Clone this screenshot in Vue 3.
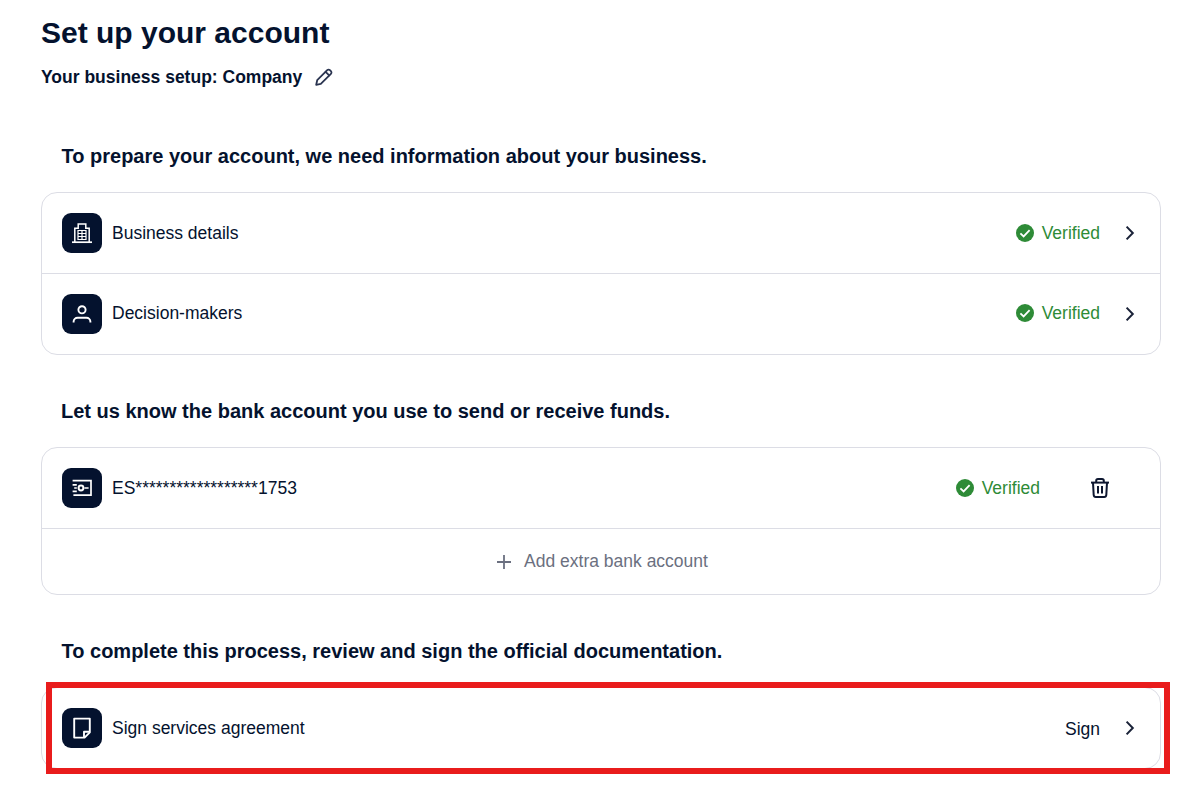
<script setup>
const verified = 'Verified'
</script>

<template>
  <div class="page">
    <h1 class="title">Set up your account</h1>
    <div class="setup">
      <span>Your business setup: Company</span>
      <svg class="pencil" width="20" height="20" viewBox="0 0 20 20" fill="none" stroke="#2a3450" stroke-width="1.8" stroke-linejoin="round" stroke-linecap="round">
        <path d="M2.2 17.8l1-4.6L13.2 3.1a1.9 1.9 0 0 1 2.7 0l1 1a1.9 1.9 0 0 1 0 2.7L6.8 16.8l-4.6 1z" />
        <path d="M11.6 4.8l3.6 3.6" />
      </svg>
    </div>

    <h2 class="heading first">To prepare your account, we need information about your business.</h2>
    <div class="card">
      <div class="row">
        <span class="badge">
          <svg width="24" height="24" viewBox="0 0 24 24" fill="none" stroke="#fff" stroke-width="1.5">
            <path d="M4.8 21V7.2h3.4V3h7.6v4.2h3.4V21" />
            <path d="M2 21.2h20" stroke-width="1.7" />
            <path d="M8 9.5h8v9H8zM12 9.5v9M8 12.5h8M8 15.5h8" stroke-width="1.2" />
          </svg>
        </span>
        <span class="label">Business details</span>
        <span class="status">
          <svg width="18" height="18" viewBox="0 0 18 18">
            <circle cx="9" cy="9" r="9" fill="#2e8b37" />
            <path d="M4.4 9.4l3.2 3 6-6.2" fill="none" stroke="#fff" stroke-width="1.8" />
          </svg>
          {{ verified }}
        </span>
        <svg class="chev" width="12" height="16" viewBox="0 0 12 16" fill="none" stroke="#1a2238" stroke-width="2">
          <path d="M2.6 1.6l6.2 6.4-6.2 6.4" />
        </svg>
      </div>
      <div class="row">
        <span class="badge">
          <svg width="24" height="24" viewBox="0 0 24 24" fill="none" stroke="#fff" stroke-width="1.9">
            <circle cx="12" cy="7.8" r="3.6" />
            <path d="M3.6 20.4v-.6c0-2.3 1.8-4 4-4h8.8c2.2 0 4 1.7 4 4v.6" />
          </svg>
        </span>
        <span class="label raised">Decision-makers</span>
        <span class="status raised">
          <svg width="18" height="18" viewBox="0 0 18 18">
            <circle cx="9" cy="9" r="9" fill="#2e8b37" />
            <path d="M4.4 9.4l3.2 3 6-6.2" fill="none" stroke="#fff" stroke-width="1.8" />
          </svg>
          {{ verified }}
        </span>
        <svg class="chev" width="12" height="16" viewBox="0 0 12 16" fill="none" stroke="#1a2238" stroke-width="2">
          <path d="M2.6 1.6l6.2 6.4-6.2 6.4" />
        </svg>
      </div>
    </div>

    <h2 class="heading second">Let us know the bank account you use to send or receive funds.</h2>
    <div class="card">
      <div class="row">
        <span class="badge">
          <svg width="24" height="24" viewBox="0 0 24 24" fill="none" stroke="#fff" stroke-width="1.7">
            <path d="M2.6 4.6h18.4v14.6H3.4" />
            <path d="M2.6 8.8h4.2M4.2 12h2.6M2.6 15.4h4.2M14.4 12h4.2" />
            <circle cx="11" cy="12" r="2.4" stroke-width="2" />
          </svg>
        </span>
        <span class="label">ES******************1753</span>
        <span class="status">
          <svg width="18" height="18" viewBox="0 0 18 18">
            <circle cx="9" cy="9" r="9" fill="#2e8b37" />
            <path d="M4.4 9.4l3.2 3 6-6.2" fill="none" stroke="#fff" stroke-width="1.8" />
          </svg>
          {{ verified }}
        </span>
        <svg class="trash" width="20" height="20" viewBox="0 0 20 20" fill="none" stroke="#0e1730" stroke-width="2" stroke-linejoin="round">
          <path d="M1 4.6h18" />
          <path d="M6.2 4.6V2.8c0-1 .8-1.8 1.8-1.8h4c1 0 1.8.8 1.8 1.8v1.8" />
          <path d="M3 4.6l.7 12.4c.1 1.2 1 2 2.1 2h8.4c1.1 0 2-.8 2.1-2L17 4.6" />
          <path d="M8 8v7.4M12 8v7.4" />
        </svg>
      </div>
      <div class="add">
        <svg width="16" height="16" viewBox="0 0 16 16" fill="none" stroke="#6b7080" stroke-width="1.8">
          <path d="M8 1v14M1 8h14" />
        </svg>
        <span>Add extra bank account</span>
      </div>
    </div>

    <h2 class="heading third">To complete this process, review and sign the official documentation.</h2>
    <div class="card sign-card">
      <div class="row">
        <span class="badge">
          <svg width="24" height="24" viewBox="0 0 24 24" fill="none" stroke="#fff" stroke-width="1.9" stroke-linejoin="round">
            <path d="M14.6 21.6H4.2V2.6h15.6v13.8l-5.2 5.2z" />
            <path d="M14 21.4v-5.6h5.6" />
          </svg>
        </span>
        <span class="label">Sign services agreement</span>
        <span class="sign">Sign</span>
        <svg class="chev" width="12" height="16" viewBox="0 0 12 16" fill="none" stroke="#1a2238" stroke-width="2">
          <path d="M2.6 1.6l6.2 6.4-6.2 6.4" />
        </svg>
      </div>
      <div class="highlight"></div>
    </div>
  </div>
</template>

<style>
html, body { background: #fff; }
</style>

<style scoped>
.page {
  box-sizing: border-box;
  width: 1120px;
  min-height: 812px;
  margin-left: 41px;
  padding-top: 15px;
  font-family: "Liberation Sans", Arial, sans-serif;
  color: #04122e;
}
.title {
  margin: 0;
  font-size: 30px;
  line-height: 36px;
  font-weight: 700;
}
.setup {
  display: flex;
  align-items: center;
  gap: 12px;
  margin-top: 15px;
  height: 22px;
  font-size: 17.5px;
  font-weight: 700;
}
.heading {
  margin: 0;
  font-size: 20px;
  line-height: 24px;
  font-weight: 700;
}
.first { margin: 56px 0 24px 20.5px; }
.second { margin: 44px 0 24px 20px; }
.third { margin: 44px 0 24px 20.5px; }
.card {
  position: relative;
  border: 1px solid #dcdde5;
  border-radius: 16px;
  background: #fff;
}
.row {
  display: flex;
  align-items: center;
  height: 80px;
  padding: 0 20px;
}
.row + .row {
  border-top: 1px solid #dcdde5;
}
.badge {
  display: flex;
  align-items: center;
  justify-content: center;
  width: 40px;
  height: 40px;
  border-radius: 9px;
  background: #04122e;
  flex: none;
}
.label {
  margin-left: 10px;
  font-size: 17.5px;
}
.status {
  display: flex;
  align-items: center;
  gap: 8px;
  margin-left: auto;
  font-size: 17.5px;
  color: #2e8b37;
}
.raised {
  margin-bottom: 2px;
}
.chev {
  margin-left: 24px;
  margin-right: 4px;
}
.trash {
  margin-left: 50px;
  margin-right: 30px;
}
.add {
  display: flex;
  align-items: center;
  justify-content: center;
  gap: 12px;
  height: 65px;
  padding-left: 2px;
  border-top: 1px solid #dcdde5;
  font-size: 17.5px;
  color: #6b7080;
}
.sign {
  margin-left: auto;
  margin-top: 2px;
  font-size: 17.5px;
}
.highlight {
  position: absolute;
  left: 4px;
  right: -10px;
  top: -6px;
  bottom: -6px;
  border: 6px solid #e91c1c;
  pointer-events: none;
}
</style>
